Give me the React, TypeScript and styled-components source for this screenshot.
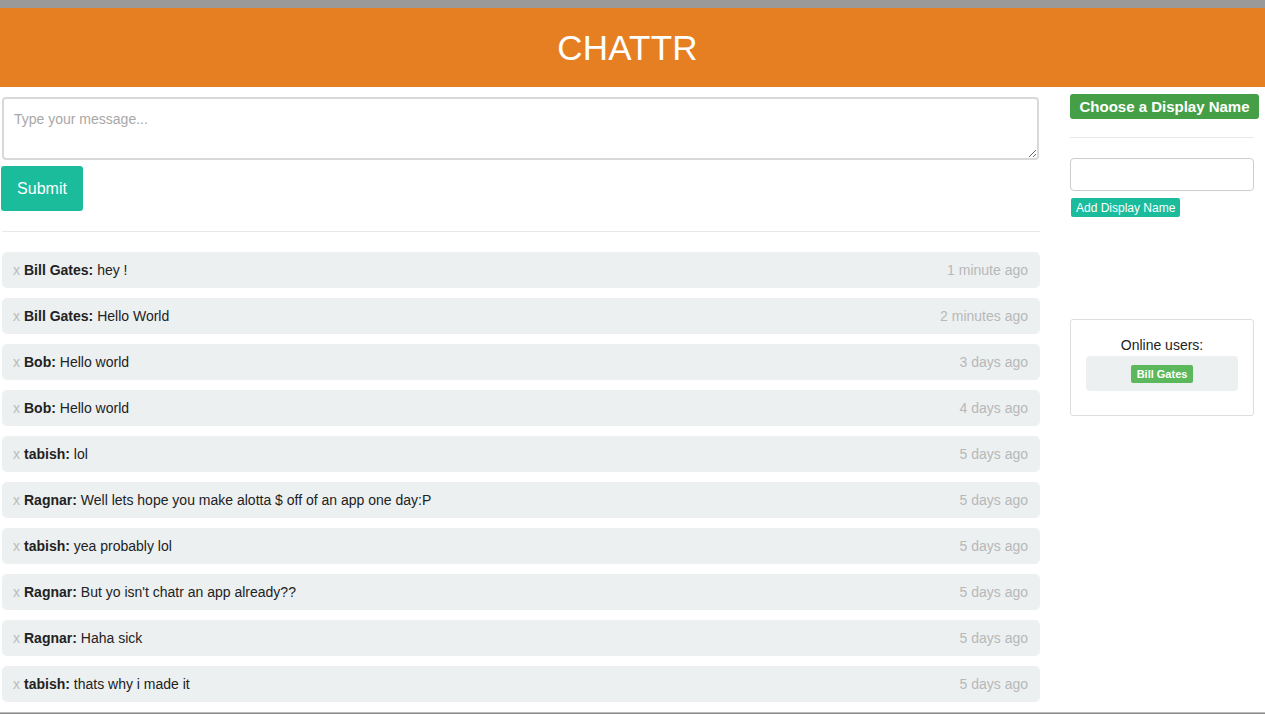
import React from 'react';
import styled, { createGlobalStyle } from 'styled-components';

interface Message {
  id: number;
  author: string;
  text: string;
  time: string;
}

const messages: Message[] = [
  { id: 1, author: 'Bill Gates', text: 'hey !', time: '1 minute ago' },
  { id: 2, author: 'Bill Gates', text: 'Hello World', time: '2 minutes ago' },
  { id: 3, author: 'Bob', text: 'Hello world', time: '3 days ago' },
  { id: 4, author: 'Bob', text: 'Hello world', time: '4 days ago' },
  { id: 5, author: 'tabish', text: 'lol', time: '5 days ago' },
  { id: 6, author: 'Ragnar', text: 'Well lets hope you make alotta $ off of an app one day:P', time: '5 days ago' },
  { id: 7, author: 'tabish', text: 'yea probably lol', time: '5 days ago' },
  { id: 8, author: 'Ragnar', text: "But yo isn't chatr an app already??", time: '5 days ago' },
  { id: 9, author: 'Ragnar', text: 'Haha sick', time: '5 days ago' },
  { id: 10, author: 'tabish', text: 'thats why i made it', time: '5 days ago' },
];

const GlobalStyle = createGlobalStyle`
  body {
    margin: 0;
    background: #fff;
    font-family: "Liberation Sans", Arial, sans-serif;
    color: #333;
  }
  * { box-sizing: border-box; }
`;

const Header = styled.header`
  border-top: 8px solid #999;
  background: #e67e22;
  height: 87px;
  display: flex;
  align-items: center;
  justify-content: center;
  padding-right: 10px;
`;

const Title = styled.h1`
  margin: 0;
  color: #fff;
  font-size: 35px;
  font-weight: 400;
  letter-spacing: 0.2px;
`;

const Layout = styled.div`
  display: grid;
  grid-template-columns: 1040px 189px;
  column-gap: 30px;
`;

const MainColumn = styled.main`
  padding-top: 10px;
`;

const MessageBox = styled.textarea`
  display: block;
  width: 1037px;
  height: 63px;
  margin-left: 2px;
  padding: 12px 10px;
  border: 2px solid #d9d9d9;
  border-radius: 4px;
  font-family: inherit;
  font-size: 14px;
  color: #333;
  &::placeholder { color: #a8a8a8; }
`;

const SubmitButton = styled.button`
  margin-top: 6px;
  margin-left: 1px;
  width: 82px;
  height: 45px;
  border: none;
  border-radius: 3px;
  background: #1abc9c;
  color: #fff;
  font-family: inherit;
  font-size: 16px;
`;

const Divider = styled.hr<{ $gap: number }>`
  border: none;
  border-top: 1px solid #e8e8e8;
  margin: ${({ $gap }) => `${$gap}px 0 ${$gap}px 2px`};
`;

const MessageList = styled.ul`
  list-style: none;
  margin: 0;
  padding: 0 0 0 2px;
  display: flex;
  flex-direction: column;
  gap: 10px;
`;

const MessageRow = styled.li`
  height: 36px;
  display: flex;
  align-items: center;
  justify-content: space-between;
  padding: 0 12px 0 11px;
  background: #ecf0f1;
  border-radius: 5px;
  font-size: 14px;
  color: #222;
`;

const Remove = styled.span`
  color: #bbb;
  margin-right: 4px;
`;

const Author = styled.strong`
  font-weight: 700;
`;

const Time = styled.span`
  color: #b8b8b8;
`;

const Sidebar = styled.aside`
  padding-top: 7px;
  display: flex;
  flex-direction: column;
  align-items: flex-start;
`;

const ChooseButton = styled.button`
  width: 189px;
  height: 25px;
  border: none;
  border-radius: 3px;
  background: #449f46;
  color: #fff;
  font-family: inherit;
  font-weight: 700;
  font-size: 15px;
  padding: 0;
`;

const SideDivider = styled.hr`
  width: 184px;
  border: none;
  border-top: 1px solid #e8e8e8;
  margin: 18px 0 20px;
`;

const NameInput = styled.input`
  width: 184px;
  height: 33px;
  border: 1px solid #ccc;
  border-radius: 4px;
  padding: 0 8px;
`;

const AddButton = styled.button`
  margin-top: 7px;
  margin-left: 1px;
  height: 19px;
  padding: 0 5px;
  border: none;
  border-radius: 2px;
  background: #1abc9c;
  color: #fff;
  font-family: inherit;
  font-size: 12px;
`;

const OnlinePanel = styled.section`
  margin-top: 102px;
  width: 184px;
  height: 97px;
  border: 1px solid #ddd;
  border-radius: 3px;
  padding: 17px 15px 0;
  display: flex;
  flex-direction: column;
  align-items: center;
`;

const OnlineLabel = styled.div`
  font-size: 14px;
  color: #222;
  line-height: 16px;
`;

const OnlineList = styled.div`
  margin-top: 3px;
  width: 152px;
  height: 35px;
  background: #ecf0f1;
  border-radius: 4px;
  display: flex;
  align-items: center;
  justify-content: center;
`;

const UserBadge = styled.span`
  background: #5cb85c;
  color: #fff;
  font-size: 11px;
  font-weight: 700;
  padding: 3px 6px;
  border-radius: 2px;
  line-height: 12px;
`;

const FrameEdge = styled.div`
  position: fixed;
  left: 0;
  right: 0;
  bottom: 0;
  height: 2px;
  background: #8a8a8a;
  border-top: 1px solid #bbb;
`;

const App: React.FC = () => (
  <>
    <GlobalStyle />
    <Header>
      <Title>CHATTR</Title>
    </Header>
    <Layout>
      <MainColumn>
        <MessageBox placeholder="Type your message..." />
        <SubmitButton>Submit</SubmitButton>
        <Divider $gap={20} />
        <MessageList>
          {messages.map((m) => (
            <MessageRow key={m.id}>
              <span>
                <Remove>x</Remove>
                <Author>{m.author}:</Author> {m.text}
              </span>
              <Time>{m.time}</Time>
            </MessageRow>
          ))}
        </MessageList>
      </MainColumn>
      <Sidebar>
        <ChooseButton>Choose a Display Name</ChooseButton>
        <SideDivider />
        <NameInput />
        <AddButton>Add Display Name</AddButton>
        <OnlinePanel>
          <OnlineLabel>Online users:</OnlineLabel>
          <OnlineList>
            <UserBadge>Bill Gates</UserBadge>
          </OnlineList>
        </OnlinePanel>
      </Sidebar>
    </Layout>
    <FrameEdge />
  </>
);

export default App;
